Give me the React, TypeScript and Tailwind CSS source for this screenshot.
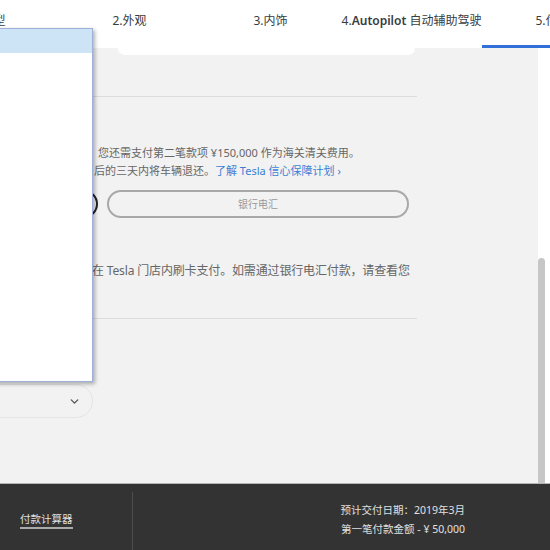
import { ChevronDown } from 'lucide-react';

const font = { fontFamily: '"Noto Sans", "Noto Sans CJK SC", sans-serif' };

export default function App() {
  const steps = ['1.车型', '2.外观', '3.内饰', '4.Autopilot 自动辅助驾驶', '5.付款'];

  return (
    <div className="relative w-[550px] h-[550px] overflow-hidden bg-white flex flex-col" style={font}>
      {/* Step nav */}
      <div className="h-12 shrink-0 bg-white flex -ml-[82px]">
        {steps.map((s, i) => (
          <div
            key={i}
            className={`w-[141px] shrink-0 flex items-center justify-center pb-[6px] text-[12px] text-[#393c41] whitespace-nowrap ${
              i === 4 ? 'border-b-[3px] border-[#3170d8] pt-[3px]' : ''
            }`}
          >
            {i === 3 ? (
              <span>
                4.<span className="font-semibold">Autopilot</span> 自动辅助驾驶
              </span>
            ) : (
              s
            )}
          </div>
        ))}
      </div>

      {/* Main area */}
      <div className="h-[436px] shrink-0 flex border-b border-[#b5b5b5]">
        <div className="w-[538px] shrink-0 bg-[#f2f2f2] flex flex-col">
          <div className="h-[7px] ml-[118px] w-[297px] bg-white rounded-b-[10px]" />
          <div className="mt-[41px] h-px w-[417px] bg-[#dcdcdc]" />

          <div className="ml-[92px] w-[318px] text-[#666] whitespace-nowrap">
            <div className="text-[11px] leading-[18px]">
              <p className="mt-[47px] pl-[6px]">您还需支付第二笔款项 ¥150,000 作为海关清关费用。</p>
              <p className="pl-[2px]">
                后的三天内将车辆退还。<span className="text-[#3a7fd5]">了解 Tesla 信心保障计划 ›</span>
              </p>
            </div>

            <div className="mt-[10px] -ml-[296px] flex gap-[9px]">
              <button className="w-[302px] h-[28px] rounded-full border-2 border-[#222] text-[10px] text-[#222]">
                信用卡
              </button>
              <button className="w-[302px] h-[28px] rounded-full border-2 border-[#a8a8a8] text-[10px] text-[#999]">
                银行电汇
              </button>
            </div>

            <p className="mt-[44px] text-[12px] leading-[18px] tracking-[-0.15px]">
              在 Tesla 门店内刷卡支付。如需通过银行电汇付款，请查看您
            </p>
          </div>

          <div className="mt-[38px] h-px w-[417px] bg-[#dcdcdc]" />

          <div className="mt-[65px] -ml-[40px] w-[133px] h-[34px] rounded-full border border-[#e4e4e4] flex items-center justify-end pr-[11px]">
            <ChevronDown size={13} strokeWidth={2.5} className="text-[#555]" />
          </div>
        </div>

        {/* Scrollbar */}
        <div className="flex-1 bg-white flex flex-col">
          <div className="mt-[210px] w-[7px] flex-1 rounded-t-full bg-[#c6c6c6]" />
        </div>
      </div>

      {/* Footer */}
      <div className="flex-1 bg-[#333] flex text-[10.5px] text-[#e0e0e0]">
        <div className="w-[132px] flex items-center pl-[20px] pt-[6px]">
          <span className="border-b-2 border-[#aaa] leading-[16px]">付款计算器</span>
        </div>
        <div className="mt-[8px] w-px bg-[#4d4d4d]" />
        <div className="flex-1 flex flex-col items-end justify-center pr-[85px] pt-[5px] leading-[19px]">
          <p>预计交付日期：2019年3月</p>
          <p>第一笔付款金额 - ¥ 50,000</p>
        </div>
      </div>

      {/* Open select list */}
      <div className="absolute left-[-10px] top-[28px] w-[103px] h-[354px] bg-white border border-[#9fb0d8] shadow-[2px_2px_4px_rgba(0,0,0,0.3)]">
        <div className="h-[24px] bg-[#cde4f7]" />
      </div>
    </div>
  );
}
